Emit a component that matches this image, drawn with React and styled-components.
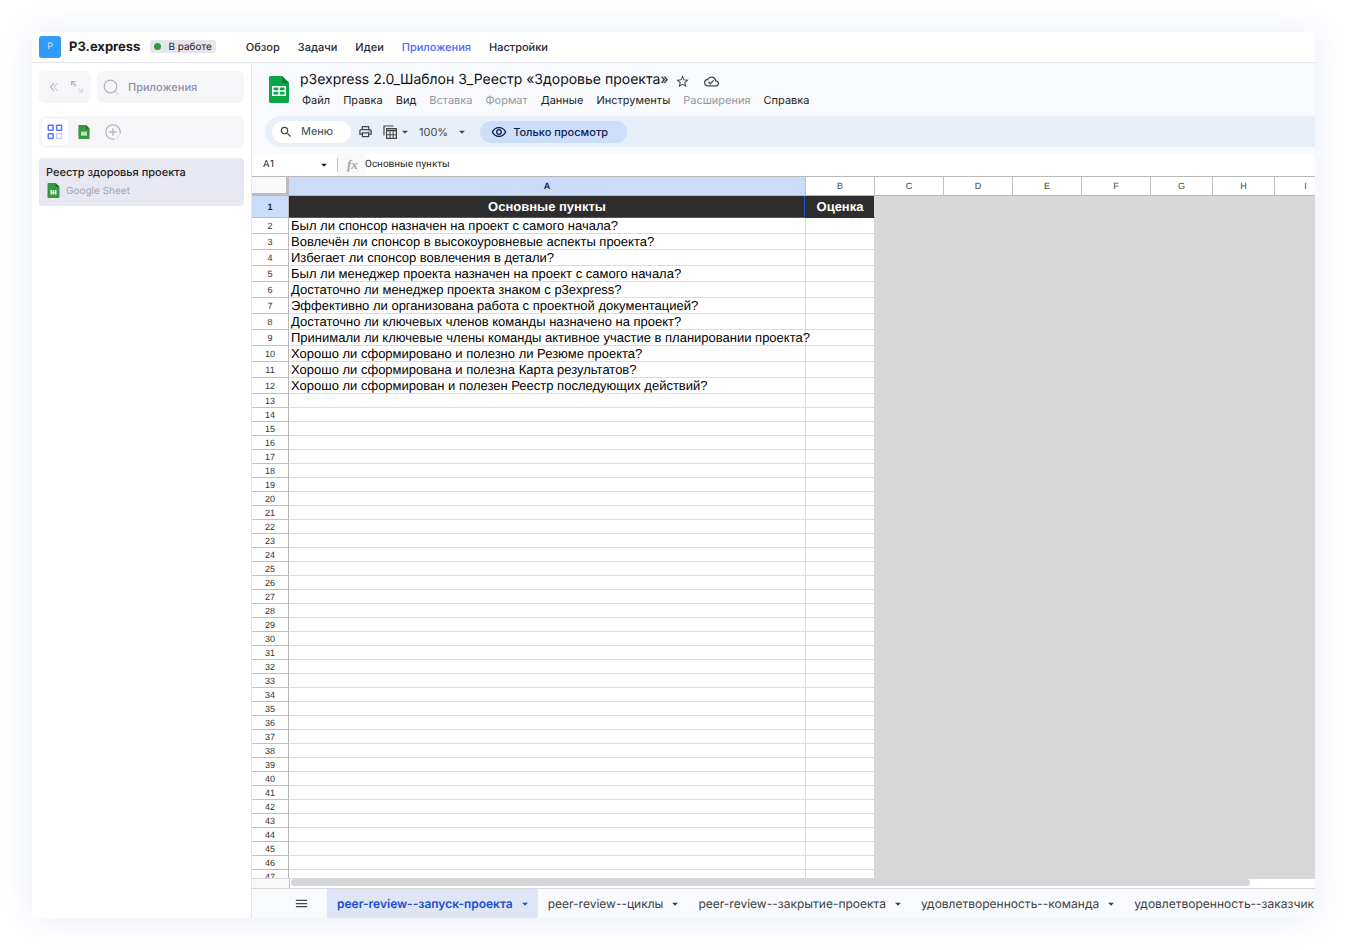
import React from 'react'
import styled, { createGlobalStyle } from 'styled-components'
import {
  MdArrowDropDown,
  MdMenu,
  MdOutlineCloudDone,
  MdOutlinePrint,
  MdOutlineRemoveRedEye,
  MdSearch,
  MdStarBorder,
} from 'react-icons/md'

const GlobalStyle = createGlobalStyle`
  * {
    box-sizing: border-box;
  }
  body {
    margin: 0;
    background: #fff;
    font-family: Inter, "Liberation Sans", sans-serif;
    color: #1d1d22;
    text-rendering: geometricPrecision;
  }
  button, input {
    font: inherit;
    color: inherit;
    border: 0;
    margin: 0;
    padding: 0;
    background: none;
    text-rendering: inherit;
  }
  button {
    cursor: pointer;
  }
  input {
    min-width: 0;
    outline: none;
  }
  svg {
    display: block;
    flex: none;
  }
`

const Page = styled.div`
  height: 100vh;
  min-height: 400px;
  padding: 32px;
  overflow: hidden;
`

const Window = styled.div`
  display: flex;
  flex-direction: column;
  height: 100%;
  background: #fff;
  box-shadow: 0 0 32px rgba(80, 110, 230, 0.12);
`

const Header = styled.header`
  display: flex;
  align-items: center;
  height: 31px;
  flex: none;
  padding: 0 7px 1px;
  border-bottom: 1px solid #e6e6f2;
`

const Avatar = styled.div`
  display: grid;
  place-items: center;
  width: 22px;
  height: 22px;
  margin-right: 8px;
  border-radius: 3px;
  background: #319bf8;
  color: #cfe8ff;
  font-size: 9px;
`

const Brand = styled.strong`
  font-size: 13px;
  font-weight: 700;
`

const Status = styled.span`
  display: flex;
  align-items: center;
  gap: 7px;
  height: 13px;
  margin-left: 10px;
  padding: 0 4px;
  border-radius: 3px;
  background: #e5e5f0;
  font-size: 10px;

  &::before {
    content: '';
    width: 7px;
    height: 7px;
    border-radius: 50%;
    background: #2e9b3b;
  }
`

const Nav = styled.nav`
  display: flex;
  gap: 18px;
  margin-left: 30px;
`

const NavLink = styled.a`
  font-size: 11px;
  font-weight: 500;
  text-decoration: none;
  color: ${(props) => (props.$active ? '#4d68ff' : '#2a2a30')};
`

const Body = styled.div`
  display: flex;
  flex: 1;
  min-height: 0;
`

const Sidebar = styled.aside`
  width: 220px;
  flex: none;
  padding: 8px 7px;
  border-right: 1px solid #e6e6f2;
`

const SideRow = styled.div`
  display: flex;
  gap: 6px;
  margin-bottom: 13px;
`

const Panel = styled.div`
  display: flex;
  align-items: center;
  gap: ${(props) => props.$gap || 0}px;
  flex: ${(props) => (props.$grow ? 1 : 'none')};
  min-width: 0;
  height: 32px;
  padding: 0 ${(props) => props.$pad || 0}px;
  border-radius: 6px;
  background: #f6f6f9;
`

const SearchInput = styled.input`
  width: 100%;
  font-size: 11px;
  font-weight: 500;

  &::placeholder {
    color: #8f91a8;
    opacity: 1;
  }
`

const ToolButton = styled.button`
  display: grid;
  place-items: center;
  width: ${(props) => (props.$narrow ? 23 : 26)}px;
  height: 26px;
  border-radius: 4px;
  background: ${(props) => (props.$active ? '#fff' : 'none')};
`

const Card = styled.button`
  display: block;
  width: 100%;
  height: 48px;
  margin-top: 10px;
  padding: 0 7px 2px;
  border-radius: 4px;
  background: #e8e8f2;
  text-align: left;
`

const CardTitle = styled.div`
  font-size: 11px;
  line-height: 16px;
  font-weight: 500;
`

const CardMeta = styled.div`
  display: flex;
  align-items: center;
  gap: 6px;
  margin-top: 3px;
  padding-left: 1px;
  font-size: 10px;
  line-height: 16px;
  color: #a2a3b6;
`

const Sheet = styled.main`
  display: flex;
  flex-direction: column;
  flex: 1;
  min-width: 0;
  background: #f9fafe;
`

const DocHead = styled.div`
  display: flex;
  gap: 10px;
  height: 53px;
  flex: none;
  padding: 6px 17px 0;
`

const DocLogo = styled.div`
  padding-top: 7px;
`

const DocTitleRow = styled.div`
  display: flex;
  align-items: center;
  gap: 7px;
  height: 21px;
  padding-left: 1px;
`

const DocTitle = styled.h1`
  margin: 0;
  font-size: 14px;
  line-height: 20px;
  font-weight: 400;
  color: #111;
`

const DocActions = styled.div`
  display: flex;
  gap: 14px;
  padding-top: 3px;
  color: #444746;
`

const MenuBar = styled.div`
  display: flex;
  gap: 13px;
  padding-left: 3px;
`

const MenuItem = styled.button`
  font-size: 11px;
  line-height: 20px;
  color: ${(props) => (props.disabled ? '#9598a0' : '#1f1f1f')};
`

const Toolbar = styled.div`
  display: flex;
  align-items: center;
  height: 31px;
  flex: none;
  margin-left: 13px;
  padding-left: 7px;
  border-radius: 16px 0 0 16px;
  background: #e8eff9;
  color: #444746;
`

const MenuSearch = styled.label`
  display: flex;
  align-items: center;
  gap: 8px;
  width: 79px;
  height: 22px;
  margin-right: 7px;
  padding-left: 7px;
  border-radius: 11px;
  background: #fff;

  input {
    width: 44px;
    padding-bottom: 2px;
    font-size: 11px;
  }
  input::placeholder {
    color: #444746;
    opacity: 1;
  }
`

const ToolItem = styled.button`
  display: flex;
  align-items: center;
  gap: ${(props) => props.$gap || 0}px;
  margin-right: ${(props) => props.$space || 0}px;
  font-size: 11px;
`

const ViewOnly = styled.button`
  display: flex;
  align-items: center;
  gap: 6px;
  height: 22px;
  padding: 0 19px 0 11px;
  border-radius: 11px;
  background: #cddefb;
  color: #0b1d4d;
  font-size: 11px;
  font-weight: 500;
`

const FormulaBar = styled.div`
  display: flex;
  align-items: center;
  height: 22px;
  flex: none;
  margin-top: 7px;
  background: #fff;
  font-family: Roboto, "Liberation Sans", sans-serif;
  font-size: 10px;
  color: #1f1f1f;

  input {
    padding-bottom: 2px;
  }
`

const NameBox = styled.div`
  display: flex;
  align-items: center;
  width: 86px;
  height: 14px;
  padding: 0 6px 0 11px;
  border-right: 1px solid #c6c6c6;

  input {
    width: 100%;
  }
`

const Fx = styled.span`
  width: 27px;
  padding-left: 9px;
  background: #f9f9fa;
  color: #a5a5a5;
  font-family: "Liberation Serif", serif;
  font-style: italic;
  font-weight: 700;
  font-size: 13px;
  line-height: 22px;
`

const FormulaInput = styled.input`
  flex: 1;
`

const GridWrap = styled.div`
  flex: 1;
  min-height: 0;
  overflow: hidden;
  border-top: 1px solid #b8b8b8;
  background: #d8d8d8;
`

const Table = styled.table`
  width: 1085px;
  table-layout: fixed;
  border-collapse: separate;
  border-spacing: 0;
  font-family: "Liberation Sans", sans-serif;
`

const Corner = styled.td`
  height: 19px;
  padding: 0;
  background: #f8f9fa;
  border-right: 3px solid #bdbdbd;
  border-bottom: 3px solid #bdbdbd;
`

const ColHead = styled.th`
  height: 19px;
  padding: 0;
  border-right: 1px solid #c0c0c0;
  border-bottom: 1px solid #b8b8b8;
  background: ${(props) => (props.$active ? '#cbdcfb' : '#fff')};
  color: ${(props) => (props.$active ? '#0b1d4d' : '#444746')};
  font-size: 9px;
  line-height: 16px;
  font-weight: ${(props) => (props.$active ? 700 : 400)};
`

const RowHead = styled.th`
  padding: 0;
  border-right: 1px solid #b8b8b8;
  border-bottom: 1px solid #c0c0c0;
  background: ${(props) => (props.$active ? '#cbdcfb' : '#fff')};
  color: ${(props) => (props.$active ? '#0b1d4d' : '#333')};
  font-size: 9px;
  line-height: 12px;
  font-weight: ${(props) => (props.$active ? 700 : 400)};
`

const Row = styled.tr`
  height: ${(props) => props.$height}px;
`

const Cell = styled.td`
  padding: 0 0 0 2px;
  border-right: 1px solid #dcdcdc;
  border-bottom: 1px solid #dcdcdc;
  background: #fff;
  color: #000;
  font-size: 13px;
  line-height: 13px;
  white-space: nowrap;

  &:last-child {
    border-right-color: #d8d8d8;
  }
`

const TitleCell = styled(Cell)`
  padding: 0;
  background: #2d2d2d;
  background-clip: padding-box;
  border-right-color: #2d2d2d;
  border-bottom-color: ${(props) => (props.$selected ? '#1a5fd6' : '#2d2d2d')};
  box-shadow: ${(props) => (props.$selected ? 'inset -1px 0 #1a5fd6' : 'none')};
  color: #fff;
  font-weight: 700;
  text-align: center;
`

const ScrollRow = styled.div`
  display: flex;
  height: 11px;
  flex: none;
  border-top: 1px solid #d9d9dc;
  border-bottom: 1px solid #d9d9dc;
  background: #fff;
`

const ScrollCorner = styled.div`
  width: 38px;
  flex: none;
  border-right: 1px solid #c6c6c6;
  background: #f8f8f8;
`

const ScrollTrack = styled.div`
  flex: 1;
  padding: 0 4px 0 1px;
`

const ScrollThumb = styled.div`
  width: 94%;
  height: 7px;
  border-radius: 4px;
  background: #d4d5d9;
`

const Tabs = styled.div`
  display: flex;
  height: 29px;
  flex: none;
  overflow: hidden;
`

const AllSheets = styled.button`
  display: grid;
  place-items: center;
  width: 75px;
  flex: none;
  padding-left: 23px;
  color: #444746;
`

const Tab = styled.button`
  display: flex;
  align-items: center;
  gap: 5px;
  flex: none;
  padding: 0 6px 0 10px;
  background: ${(props) => (props.$active ? '#dee5f5' : 'none')};
  color: ${(props) => (props.$active ? '#1a4fd0' : '#3c3f43')};
  font-size: 12px;
  font-weight: ${(props) => (props.$active ? 600 : 400)};
  white-space: nowrap;
`

const navItems = ['Обзор', 'Задачи', 'Идеи', 'Приложения', 'Настройки']

const menuItems = [
  { label: 'Файл' },
  { label: 'Правка' },
  { label: 'Вид' },
  { label: 'Вставка', disabled: true },
  { label: 'Формат', disabled: true },
  { label: 'Данные' },
  { label: 'Инструменты' },
  { label: 'Расширения', disabled: true },
  { label: 'Справка' },
]

const columns = [
  { name: 'A', width: 517 },
  { name: 'B', width: 69 },
  { name: 'C', width: 69 },
  { name: 'D', width: 69 },
  { name: 'E', width: 69 },
  { name: 'F', width: 69 },
  { name: 'G', width: 62 },
  { name: 'H', width: 62 },
  { name: 'I', width: 62 },
]

const questions = [
  'Был ли спонсор назначен на проект с самого начала?',
  'Вовлечён ли спонсор в высокоуровневые аспекты проекта?',
  'Избегает ли спонсор вовлечения в детали?',
  'Был ли менеджер проекта назначен на проект с самого начала?',
  'Достаточно ли менеджер проекта знаком с p3express?',
  'Эффективно ли организована работа с проектной документацией?',
  'Достаточно ли ключевых членов команды назначено на проект?',
  'Принимали ли ключевые члены команды активное участие в планировании проекта?',
  'Хорошо ли сформировано и полезно ли Резюме проекта?',
  'Хорошо ли сформирована и полезна Карта результатов?',
  'Хорошо ли сформирован и полезен Реестр последующих действий?',
]

const emptyRows = Array.from({ length: 35 }, (_, i) => i + 13)

const sheets = [
  'peer-review--запуск-проекта',
  'peer-review--циклы',
  'peer-review--закрытие-проекта',
  'удовлетворенность--команда',
  'удовлетворенность--заказчик',
]

const SheetIcon = ({ width, height }) => (
  <svg width={width} height={height} viewBox="0 0 12 15">
    <path d="M1 0h7l4 4v10a1 1 0 0 1-1 1H1a1 1 0 0 1-1-1V1a1 1 0 0 1 1-1z" fill="#35983f" />
    <path d="M8 0l4 4H8z" fill="#1c6e2a" />
    <path d="M3 7h6v4.500H3z" fill="#e3f4e4" />
    <path d="M5 7v2M7 7v2M5 10v1.500M7 10v1.500" stroke="#35983f" strokeWidth=".7" />
  </svg>
)

const DocIcon = () => (
  <svg width="20" height="28" viewBox="0 0 20 28">
    <path d="M1.5 0H13l7 7v18.500a1.500 1.500 0 0 1-1.500 1.500h-17A1.500 1.500 0 0 1 0 25.500v-24A1.500 1.500 0 0 1 1.500 0z" fill="#0ba647" />
    <path d="M13 0l7 7h-7z" fill="#07802f" />
    <path d="M3.750 10.750h12.500v8.500H3.750z" fill="none" stroke="#fff" strokeWidth="1.500" />
    <path d="M10 10.750v8.500M3.750 15h12.500" stroke="#fff" strokeWidth="1.500" />
  </svg>
)

const CollapseIcon = () => (
  <svg width="10" height="10" viewBox="0 0 10 10" fill="none" strokeWidth="1.200">
    <path d="M5 1L1.500 5 5 9" stroke="#b9bac6" />
    <path d="M8.500 1L5 5l3.500 4" stroke="#d5d5de" />
  </svg>
)

const ExpandIcon = () => (
  <svg width="14" height="14" viewBox="0 0 14 14" fill="none" strokeWidth="1.200">
    <path d="M1.500 5.500v-4h4M1.500 1.500l4.500 4.500" stroke="#b3b4c1" />
    <path d="M12.500 8.500v4h-4M12.500 12.500L8.500 8.500" stroke="#d9d9e2" />
  </svg>
)

const LoupeIcon = () => (
  <svg width="16" height="16" viewBox="0 0 16 16" fill="none" strokeWidth="1.200" strokeLinecap="round">
    <circle cx="7.500" cy="7.500" r="6.300" stroke="#b3b4c3" />
    <path d="M12.500 12.500l2.300 2.300" stroke="#d3d4de" />
  </svg>
)

const GridIcon = () => (
  <svg width="16" height="16" viewBox="0 0 16 16" fill="none" strokeWidth="1.500">
    <rect x="1.250" y="1.250" width="4.900" height="4.900" rx=".5" stroke="#5b74ff" />
    <rect x="9.650" y="1.250" width="4.900" height="4.900" rx=".5" stroke="#5b74ff" />
    <rect x="1.250" y="9.650" width="4.900" height="4.900" rx=".5" stroke="#5b74ff" />
    <rect x="9.650" y="9.650" width="4.900" height="4.900" rx=".5" stroke="#c9d1ff" />
  </svg>
)

const AddIcon = () => (
  <svg width="16" height="16" viewBox="0 0 16 16" fill="none" strokeWidth="1.200" strokeLinecap="round">
    <path d="M9.200 15.100A7.200 7.200 0 1 1 15.100 9.200" stroke="#b3b4c1" />
    <path d="M11.500 14.300a7.200 7.200 0 0 0 2.800-2.800" stroke="#d9d9e2" />
    <path d="M8 5v6M5 8h6" stroke="#b3b4c1" strokeWidth="1.400" />
  </svg>
)

const FilterIcon = () => (
  <svg width="14" height="14" viewBox="0 0 14 14" fill="none" stroke="#444746" strokeWidth="1.200">
    <path d="M1 10.500V1h9.500" />
    <path d="M3.600 3.600h9.800v9.800H3.600z" />
    <path d="M3.600 5.500h9.800" strokeWidth="1.600" />
    <path d="M3.600 9.800h9.800M7 6v7.400M10.200 6v7.400" strokeWidth="1" />
  </svg>
)

const App = () => (
  <>
    <GlobalStyle />
    <Page>
      <Window>
        <Header>
          <Avatar>P</Avatar>
          <Brand>P3.express</Brand>
          <Status>В работе</Status>
          <Nav>
            {navItems.map((item) => (
              <NavLink key={item} href="#" $active={item === 'Приложения'}>
                {item}
              </NavLink>
            ))}
          </Nav>
        </Header>
        <Body>
          <Sidebar>
            <SideRow>
              <Panel $pad={3}>
                <ToolButton $narrow aria-label="Свернуть">
                  <CollapseIcon />
                </ToolButton>
                <ToolButton $narrow aria-label="Развернуть">
                  <ExpandIcon />
                </ToolButton>
              </Panel>
              <Panel as="label" $gap={9} $pad={6} $grow>
                <LoupeIcon />
                <SearchInput aria-label="Приложения" placeholder="Приложения" />
              </Panel>
            </SideRow>
            <Panel $gap={3} $pad={3}>
              <ToolButton $active aria-label="Все приложения">
                <GridIcon />
              </ToolButton>
              <ToolButton aria-label="Таблицы">
                <SheetIcon width={12} height={14} />
              </ToolButton>
              <ToolButton aria-label="Добавить">
                <AddIcon />
              </ToolButton>
            </Panel>
            <Card>
              <CardTitle>Реестр здоровья проекта</CardTitle>
              <CardMeta>
                <SheetIcon width={13} height={15} />
                Google Sheet
              </CardMeta>
            </Card>
          </Sidebar>
          <Sheet>
            <DocHead>
              <DocLogo>
                <DocIcon />
              </DocLogo>
              <div>
                <DocTitleRow>
                  <DocTitle>p3express 2.0_Шаблон 3_Реестр «Здоровье проекта»</DocTitle>
                  <DocActions>
                    <button aria-label="Пометить">
                      <MdStarBorder size={15} />
                    </button>
                    <button aria-label="Сохранено">
                      <MdOutlineCloudDone size={15} />
                    </button>
                  </DocActions>
                </DocTitleRow>
                <MenuBar>
                  {menuItems.map((item) => (
                    <MenuItem key={item.label} disabled={item.disabled}>
                      {item.label}
                    </MenuItem>
                  ))}
                </MenuBar>
              </div>
            </DocHead>
            <Toolbar>
              <MenuSearch>
                <MdSearch size={14} />
                <input aria-label="Меню" placeholder="Меню" />
              </MenuSearch>
              <ToolItem $space={10} aria-label="Печать">
                <MdOutlinePrint size={15} />
              </ToolItem>
              <ToolItem $gap={1} $space={7} aria-label="Фильтры">
                <FilterIcon />
                <MdArrowDropDown size={14} />
              </ToolItem>
              <ToolItem $gap={7} $space={11}>
                100%
                <MdArrowDropDown size={14} />
              </ToolItem>
              <ViewOnly>
                <MdOutlineRemoveRedEye size={16} />
                Только просмотр
              </ViewOnly>
            </Toolbar>
            <FormulaBar>
              <NameBox>
                <input aria-label="Диапазон" defaultValue="A1" />
                <MdArrowDropDown size={14} />
              </NameBox>
              <Fx>fx</Fx>
              <FormulaInput aria-label="Формула" defaultValue="Основные пункты" />
            </FormulaBar>
            <GridWrap>
              <Table>
                <colgroup>
                  <col width="37" />
                  {columns.map((col) => (
                    <col key={col.name} width={col.width} />
                  ))}
                </colgroup>
                <thead>
                  <tr>
                    <Corner />
                    {columns.map((col) => (
                      <ColHead key={col.name} scope="col" $active={col.name === 'A'}>
                        {col.name}
                      </ColHead>
                    ))}
                  </tr>
                </thead>
                <tbody>
                  <Row $height={22}>
                    <RowHead scope="row" $active>1</RowHead>
                    <TitleCell $selected>Основные пункты</TitleCell>
                    <TitleCell>Оценка</TitleCell>
                  </Row>
                  {questions.map((text, i) => (
                    <Row key={text} $height={16}>
                      <RowHead scope="row">{i + 2}</RowHead>
                      <Cell>{text}</Cell>
                      <Cell />
                    </Row>
                  ))}
                  {emptyRows.map((n) => (
                    <Row key={n} $height={14}>
                      <RowHead scope="row">{n}</RowHead>
                      <Cell />
                      <Cell />
                    </Row>
                  ))}
                </tbody>
              </Table>
            </GridWrap>
            <ScrollRow>
              <ScrollCorner />
              <ScrollTrack>
                <ScrollThumb />
              </ScrollTrack>
            </ScrollRow>
            <Tabs>
              <AllSheets aria-label="Все листы">
                <MdMenu size={15} />
              </AllSheets>
              {sheets.map((name, i) => (
                <Tab key={name} $active={i === 0}>
                  {name}
                  <MdArrowDropDown size={14} />
                </Tab>
              ))}
            </Tabs>
          </Sheet>
        </Body>
      </Window>
    </Page>
  </>
)

export default App
